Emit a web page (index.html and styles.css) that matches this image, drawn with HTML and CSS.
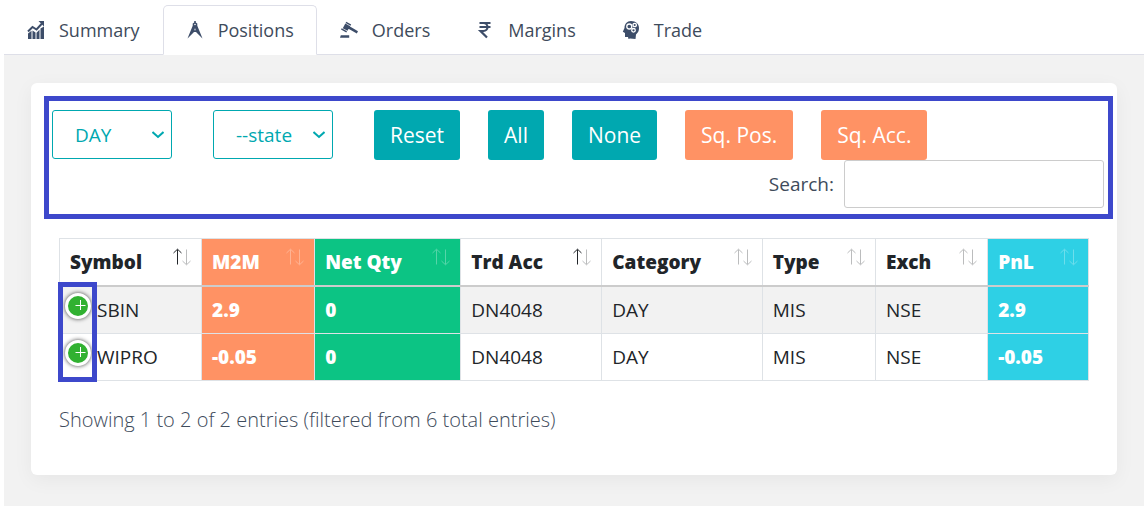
FILE: index.html
```html
<!DOCTYPE html>
<html lang="en">
<head>
<meta charset="utf-8">
<meta name="viewport" content="width=device-width, initial-scale=1">
<title>Positions</title>
<link rel="stylesheet" href="styles.css">
</head>
<body>
<svg class="symbols" aria-hidden="true">
  <symbol id="sort-up" viewBox="0 0 9 17"><path d="M4.500 16.500V1.500M.5 5L4.500 1.200 8.500 5" fill="none" stroke="currentColor" stroke-width="1"/></symbol>
  <symbol id="sort-down" viewBox="0 0 9 17"><path d="M4.500 .5V15.500M.5 12L4.500 15.800 8.500 12" fill="none" stroke="currentColor" stroke-width="1"/></symbol>
  <symbol id="chevron" viewBox="0 0 12 8"><path d="M.5 1L6 6l5.500-5" fill="none" stroke="currentColor" stroke-width="2"/></symbol>
</svg>

<nav class="tabs">
  <a class="tab" href="#summary">
    <svg class="tab-icon" viewBox="0 0 18 18"><path d="M1 12.500l3.500-2.700V18H1zM5.500 9.500L8.500 11.500V18h-3zM9.500 11.800l3-3V18h-3zM13.500 7.500L17 5.500V18h-3.500z"/><path d="M1 10.500L5.500 6l4 2.500L15 2.500" fill="none" stroke="currentColor" stroke-width="2"/><path d="M11.500 0H17v5.500z"/></svg>
    <span>Summary</span>
  </a>
  <a class="tab active" href="#positions" aria-current="page">
    <svg class="tab-icon" viewBox="0 0 18 18"><path d="M8.200 0h1.600v1.500l1.500 1v2.200L16.500 17.500 10 11H8L1.500 17.500 6.700 4.700V2.500l1.500-1zM9 2.700a.8.8 0 100 1.600.8.800 0 000-1.600zM9 7L8.300 9.200h1.400z" fill-rule="evenodd"/></svg>
    <span>Positions</span>
  </a>
  <a class="tab" href="#orders">
    <svg class="tab-icon" viewBox="0 0 18 18"><path d="M6.300.8l4.900 2.700-.7 1.200-4.900-2.700zM5.300 2.500l4.900 2.700-2.700 4.500L2.800 7.200zM1.700 7.200l5.300 3-.7 1.200-5.300-3zM10 5.500l8 4.700-1.200 2.200L8.500 7.800zM.8 14.300h8.400v2.500H0z"/></svg>
    <span>Orders</span>
  </a>
  <a class="tab" href="#margins">
    <svg class="tab-icon" viewBox="0 0 18 18"><path d="M3.500 2H14.500M3.500 6H14.500M4 2h3.500a4 4 0 010 8H4.500L11 16.500" fill="none" stroke="currentColor" stroke-width="2.200"/></svg>
    <span>Margins</span>
  </a>
  <a class="tab" href="#trade">
    <svg class="tab-icon" viewBox="0 0 18 18"><path d="M9 0c5 0 8 3 8 7 0 3-1 4.500-3 6.500L13.500 18 8 17.500 6.500 18l-.5-2H3v-4L.8 10.800 2.500 7C2.500 3 5 0 9 0z"/><g fill="none" stroke="#fff" stroke-width="1.300"><circle cx="7.300" cy="5.500" r="2.500"/><circle cx="12.700" cy="4" r="1.700"/><circle cx="11.500" cy="9.300" r="1.800"/></g></svg>
    <span>Trade</span>
  </a>
</nav>

<main class="page">
  <section class="card">
    <form class="toolbar">
      <div class="filters">
        <div class="select-box">
          <select aria-label="Category"><option>DAY</option></select>
          <svg class="chevron"><use href="#chevron"/></svg>
        </div>
        <div class="select-box">
          <select aria-label="State"><option>--state</option></select>
          <svg class="chevron"><use href="#chevron"/></svg>
        </div>
      </div>
      <div class="actions">
        <button class="btn" type="button">Reset</button>
        <button class="btn" type="button">All</button>
        <button class="btn" type="button">None</button>
        <button class="btn warn" type="button">Sq. Pos.</button>
        <button class="btn warn" type="button">Sq. Acc.</button>
      </div>
      <div class="search">
        <label for="search">Search:</label>
        <input id="search" type="search">
      </div>
    </form>

    <div class="table-wrap">
      <table class="positions">
        <colgroup>
          <col class="c-symbol"><col class="c-m2m"><col class="c-qty"><col class="c-acc"><col class="c-cat"><col class="c-type"><col class="c-exch"><col class="c-pnl">
        </colgroup>
        <thead>
          <tr>
            <th class="asc"><div class="head">Symbol<span class="sort"><svg class="up"><use href="#sort-up"/></svg><svg class="down"><use href="#sort-down"/></svg></span></div></th>
            <th class="orange"><div class="head">M2M<span class="sort"><svg class="up"><use href="#sort-up"/></svg><svg class="down"><use href="#sort-down"/></svg></span></div></th>
            <th class="green"><div class="head">Net Qty<span class="sort"><svg class="up"><use href="#sort-up"/></svg><svg class="down"><use href="#sort-down"/></svg></span></div></th>
            <th class="asc"><div class="head">Trd Acc<span class="sort"><svg class="up"><use href="#sort-up"/></svg><svg class="down"><use href="#sort-down"/></svg></span></div></th>
            <th><div class="head">Category<span class="sort"><svg class="up"><use href="#sort-up"/></svg><svg class="down"><use href="#sort-down"/></svg></span></div></th>
            <th><div class="head">Type<span class="sort"><svg class="up"><use href="#sort-up"/></svg><svg class="down"><use href="#sort-down"/></svg></span></div></th>
            <th><div class="head">Exch<span class="sort"><svg class="up"><use href="#sort-up"/></svg><svg class="down"><use href="#sort-down"/></svg></span></div></th>
            <th class="cyan"><div class="head">PnL<span class="sort"><svg class="up"><use href="#sort-up"/></svg><svg class="down"><use href="#sort-down"/></svg></span></div></th>
          </tr>
        </thead>
        <tbody>
          <tr>
            <td class="symbol"><button class="expand" type="button" aria-label="Expand SBIN"><svg viewBox="0 0 20 20"><path d="M12.500 4v10M7.500 9.500h10" stroke="#fff" stroke-width="1"/></svg></button>SBIN</td>
            <td class="orange">2.9</td><td class="green">0</td><td>DN4048</td><td>DAY</td><td>MIS</td><td>NSE</td><td class="cyan">2.9</td>
          </tr>
          <tr>
            <td class="symbol"><button class="expand" type="button" aria-label="Expand WIPRO"><svg viewBox="0 0 20 20"><path d="M12.500 4v10M7.500 9.500h10" stroke="#fff" stroke-width="1"/></svg></button>WIPRO</td>
            <td class="orange">-0.05</td><td class="green">0</td><td>DN4048</td><td>DAY</td><td>MIS</td><td>NSE</td><td class="cyan">-0.05</td>
          </tr>
        </tbody>
      </table>
      <div class="marker"></div>
    </div>

    <p class="info">Showing 1 to 2 of 2 entries (filtered from 6 total entries)</p>
  </section>
</main>
</body>
</html>
```

FILE: styles.css
```css
* { box-sizing: border-box; }

body {
  margin: 0 4px;
  min-height: 100vh;
  display: flex;
  flex-direction: column;
  background: #fff;
  color: #3e4b5b;
  font-family: "Open Sans", "Noto Sans", sans-serif;
  font-size: 19px;
  line-height: 28px;
}

button, input, select { font: inherit; }

.symbols { display: none; }

.tabs {
  display: flex;
  padding-top: 5px;
  border-bottom: 1px solid #dedfe8;
  font-size: 18px;
}

.tab {
  display: flex;
  align-items: center;
  gap: 14px;
  height: 50px;
  margin-bottom: -1px;
  padding: 0 22px;
  border: 1px solid transparent;
  border-radius: 5px 5px 0 0;
  color: #3e4b5b;
  text-decoration: none;
}

.tab.active {
  background: #fff;
  border-color: #dedfe8 #dedfe8 #fff;
}

.tab-icon {
  width: 18px;
  height: 18px;
  color: #3d4d69;
  fill: currentColor;
}

.page {
  flex: 1;
  padding: 28px 27px 31px;
  background: #f2f2f2;
}

.card {
  padding: 13px 4px 41px 13px;
  border-radius: 6px;
  background: #fff;
  box-shadow: 0 5px 20px rgba(0, 0, 0, 0.05);
}

.toolbar {
  display: flex;
  flex-wrap: wrap;
  padding: 9px 4px 6px 3px;
  border: 5px solid #3d48cb;
}

.filters { display: flex; gap: 41px; margin-right: 41px; }

.select-box {
  position: relative;
  width: 120px;
  height: 49px;
  color: #00a8b0;
}

.select-box select {
  width: 100%;
  height: 100%;
  padding: 0 22px;
  border: 1px solid #00a8b0;
  border-radius: 3px;
  background: #fff;
  color: inherit;
  appearance: none;
}

.chevron {
  position: absolute;
  top: 21px;
  right: 8px;
  width: 12px;
  height: 8px;
  pointer-events: none;
}

.actions { display: flex; gap: 28px; }

.btn {
  height: 50px;
  padding: 0 16px;
  border: 0;
  border-radius: 3px;
  background: #00a8b0;
  color: #fff;
  font-size: 21px;
}

.btn.warn { background: #ff9264; }

.search {
  display: flex;
  flex: 1 0 100%;
  align-items: center;
  justify-content: flex-end;
  gap: 10px;
}

.search input {
  width: 260px;
  height: 48px;
  padding: 0 12px;
  border: 1px solid #ccc;
  border-radius: 3px;
  background: #fff;
}

.table-wrap {
  position: relative;
  margin: 19px 24px 0 15px;
}

.positions {
  width: 100%;
  table-layout: fixed;
  border-collapse: collapse;
  color: #212529;
}

.c-symbol { width: 13.8%; }
.c-m2m { width: 11%; }
.c-qty { width: 14.2%; }
.c-acc { width: 13.7%; }
.c-cat { width: 15.6%; }
.c-type { width: 11%; }
.c-exch { width: 10.9%; }
.c-pnl { width: 9.8%; }

.positions th, .positions td {
  height: 47px;
  padding: 0 10px;
  border: 1px solid #dee2e6;
  text-align: left;
}

.positions th {
  border-bottom: 2px solid #ccc;
  font-weight: 800;
}

.positions tbody tr:first-child { background: #f2f2f2; }
.positions tbody tr:first-child td { height: 48px; }

.head { display: flex; justify-content: space-between; }

.sort { display: flex; }

.sort svg { width: 9px; height: 17px; opacity: 0.3; }
.sort .down { margin-top: 1px; }
.asc .sort .up { opacity: 1; }

.positions .orange { background: #ff9264; color: #fff; font-weight: 800; }
.positions .green { background: #0cc484; color: #fff; font-weight: 800; }
.positions .cyan { background: #2ed0e5; color: #fff; font-weight: 800; }

.positions .symbol { position: relative; padding-left: 37px; }

.expand {
  position: absolute;
  top: 6px;
  left: 5px;
  width: 26px;
  height: 26px;
  padding: 0;
  border: 3px solid #fff;
  border-radius: 50%;
  background: #31b131;
  box-shadow: 0 0 4px #444;
}

.expand svg { display: block; width: 20px; height: 20px; }

.marker {
  position: absolute;
  top: 44px;
  left: -1px;
  width: 39px;
  height: 100px;
  border: 5px solid #3d48cb;
  pointer-events: none;
}

.info {
  margin: 25px 15px 0;
  font-size: 20px;
  font-weight: 300;
}
```
